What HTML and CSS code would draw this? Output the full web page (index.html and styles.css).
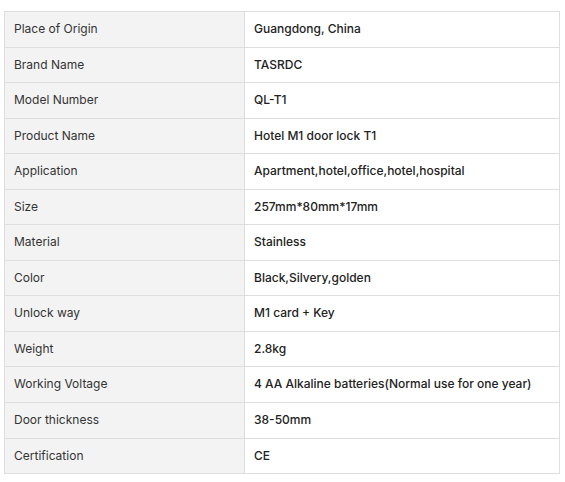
FILE: index.html
```html
<!DOCTYPE html>
<html>
<head>
<meta charset="utf-8">
<link rel="stylesheet" href="styles.css">
</head>
<body>
<table class="spec">
<tbody>
<tr><td class="k">Place of Origin</td><td class="v">Guangdong, China</td></tr>
<tr><td class="k">Brand Name</td><td class="v">TASRDC</td></tr>
<tr><td class="k">Model Number</td><td class="v">QL-T1</td></tr>
<tr><td class="k">Product Name</td><td class="v">Hotel M1 door lock T1</td></tr>
<tr><td class="k">Application</td><td class="v">Apartment,hotel,office,hotel,hospital</td></tr>
<tr><td class="k">Size</td><td class="v">257mm*80mm*17mm</td></tr>
<tr><td class="k">Material</td><td class="v">Stainless</td></tr>
<tr><td class="k">Color</td><td class="v">Black,Silvery,golden</td></tr>
<tr><td class="k">Unlock way</td><td class="v">M1 card + Key</td></tr>
<tr><td class="k">Weight</td><td class="v">2.8kg</td></tr>
<tr><td class="k">Working Voltage</td><td class="v">4 AA Alkaline batteries(Normal use for one year)</td></tr>
<tr><td class="k">Door thickness</td><td class="v">38-50mm</td></tr>
<tr><td class="k">Certification</td><td class="v">CE</td></tr>
</tbody>
</table>
</body>
</html>
```
FILE: styles.css
```css
html, body {
  margin: 0;
  padding: 0;
  background: #fff;
}
body {
  padding: 11px 6px 0 4px;
  font-family: Inter, "Noto Sans", sans-serif;
  font-size: 12px;
  color: #333;
}
.spec {
  border-collapse: collapse;
  width: 556px;
}
.spec td {
  border: 1px solid #dedede;
  padding: 10px 9px;
  line-height: 14.54px;
  text-align: left;
  vertical-align: middle;
  white-space: nowrap;
}
.spec .k {
  width: 221px;
  background: #f3f3f3;
  color: #333;
  font-weight: 400;
}
.spec .v {
  background: #fff;
  color: #222;
  font-weight: 500;
}
```
